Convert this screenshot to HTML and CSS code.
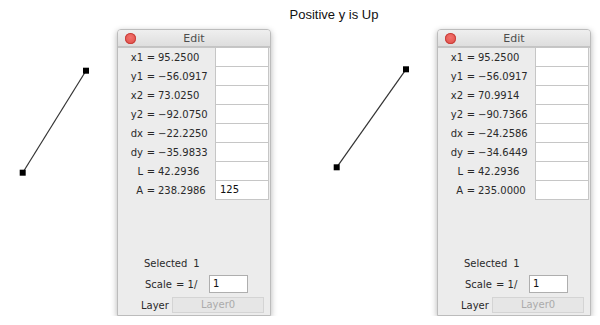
FILE: index.html
```html
<!DOCTYPE html>
<html lang="en">
<head>
    <meta charset="UTF-8">
    <meta name="viewport" content="width=device-width, initial-scale=1.0">
    <title>Positive y is Up</title>
    <link rel="stylesheet" href="styles.css">
</head>
<body>
    <div class="caption">Positive y is Up</div>
    <div class="stage">
        <div class="panel">
            <svg class="canvas" width="117" height="287">
                <line x1="22.7" y1="143.7" x2="86" y2="41.7"/>
                <rect x="19.7" y="140.7" width="6" height="6"/>
                <rect x="83" y="38.7" width="6" height="6"/>
            </svg>
            <div class="window">
                <div class="titlebar"><span class="close"></span><span class="win-title">Edit</span></div>
                <div class="fields">
                    <div class="row"><span class="lbl">x1</span><span class="eq">=</span><span class="val">95.2500</span><span class="field"></span></div>
                    <div class="row"><span class="lbl">y1</span><span class="eq">=</span><span class="val">&minus;56.0917</span><span class="field"></span></div>
                    <div class="row"><span class="lbl">x2</span><span class="eq">=</span><span class="val">73.0250</span><span class="field"></span></div>
                    <div class="row"><span class="lbl">y2</span><span class="eq">=</span><span class="val">&minus;92.0750</span><span class="field"></span></div>
                    <div class="row"><span class="lbl">dx</span><span class="eq">=</span><span class="val">&minus;22.2250</span><span class="field"></span></div>
                    <div class="row"><span class="lbl">dy</span><span class="eq">=</span><span class="val">&minus;35.9833</span><span class="field"></span></div>
                    <div class="row"><span class="lbl">L</span><span class="eq">=</span><span class="val">42.2936</span><span class="field"></span></div>
                    <div class="row"><span class="lbl">A</span><span class="eq">=</span><span class="val">238.2986</span><span class="field">125</span></div>
                </div>
                <div class="footer">
                    <div class="selected"><span>Selected</span><span class="count">1</span></div>
                    <div class="scale"><span class="scale-lbl">Scale</span><span class="scale-eq">= 1/</span><span class="input">1</span></div>
                    <div class="layer"><span class="layer-lbl">Layer</span><span class="layer-box">Layer0</span></div>
                </div>
            </div>
        </div>
        <div class="panel">
            <svg class="canvas" width="137" height="287">
                <line x1="36.7" y1="138.3" x2="106" y2="40.3"/>
                <rect x="33.7" y="135.3" width="6" height="6"/>
                <rect x="103" y="37.3" width="6" height="6"/>
            </svg>
            <div class="window">
                <div class="titlebar"><span class="close"></span><span class="win-title">Edit</span></div>
                <div class="fields">
                    <div class="row"><span class="lbl">x1</span><span class="eq">=</span><span class="val">95.2500</span><span class="field"></span></div>
                    <div class="row"><span class="lbl">y1</span><span class="eq">=</span><span class="val">&minus;56.0917</span><span class="field"></span></div>
                    <div class="row"><span class="lbl">x2</span><span class="eq">=</span><span class="val">70.9914</span><span class="field"></span></div>
                    <div class="row"><span class="lbl">y2</span><span class="eq">=</span><span class="val">&minus;90.7366</span><span class="field"></span></div>
                    <div class="row"><span class="lbl">dx</span><span class="eq">=</span><span class="val">&minus;24.2586</span><span class="field"></span></div>
                    <div class="row"><span class="lbl">dy</span><span class="eq">=</span><span class="val">&minus;34.6449</span><span class="field"></span></div>
                    <div class="row"><span class="lbl">L</span><span class="eq">=</span><span class="val">42.2936</span><span class="field"></span></div>
                    <div class="row"><span class="lbl">A</span><span class="eq">=</span><span class="val">235.0000</span><span class="field"></span></div>
                </div>
                <div class="footer">
                    <div class="selected"><span>Selected</span><span class="count">1</span></div>
                    <div class="scale"><span class="scale-lbl">Scale</span><span class="scale-eq">= 1/</span><span class="input">1</span></div>
                    <div class="layer"><span class="layer-lbl">Layer</span><span class="layer-box">Layer0</span></div>
                </div>
            </div>
        </div>
    </div>
</body>
</html>
```

FILE: styles.css
```css
body {
    margin: 0;
    background-color: white;
    font-family: "DejaVu Sans", sans-serif;
    color: #2a2a2a;
}
.caption {
    height: 29px;
    line-height: 29px;
    padding-left: 68px;
    text-align: center;
    font-family: "Liberation Sans", Arial, sans-serif;
    font-size: 13px;
    color: #111;
}
.stage {
    display: flex;
}
.panel {
    width: 300px;
    display: flex;
    align-items: flex-start;
}
.canvas {
    display: block;
    flex: none;
}
.canvas line {
    stroke: #333;
    stroke-width: 1.2;
}
.canvas rect {
    fill: #000;
}
.window {
    box-sizing: border-box;
    width: 154px;
    height: 287px;
    border: 1px solid #bcbcbc;
    border-radius: 4px 4px 0 0;
    background-color: #ececec;
    box-shadow: 0 2px 6px rgba(0, 0, 0, 0.3);
    font-size: 10px;
}
.titlebar {
    height: 16px;
    display: flex;
    align-items: center;
    border-bottom: 1px solid #c4c4c4;
    background: linear-gradient(#efefef, #dedede);
    border-radius: 3px 3px 0 0;
}
.close {
    width: 11px;
    height: 11px;
    margin-left: 7px;
    border-radius: 50%;
    background: radial-gradient(circle at 50% 40%, #f2726c, #de4a45);
    box-shadow: inset 0 0 0 1px #c8403b;
}
.win-title {
    flex: 1;
    padding-right: 18px;
    text-align: center;
    font-size: 11px;
    color: #4d4d4d;
}
.fields {
    border-top: 1px solid #c6c6c6;
}
.row {
    display: grid;
    grid-template-columns: 26px 14px 57px 54px;
    height: 19px;
    line-height: 19px;
}
.lbl {
    text-align: right;
    padding-right: 1px;
}
.eq {
    text-align: center;
}
.field {
    box-sizing: border-box;
    background-color: white;
    border-left: 1px solid #c6c6c6;
    border-right: 1px solid #c6c6c6;
    border-bottom: 1px solid #c6c6c6;
    padding-left: 4px;
    line-height: 18px;
    color: #111;
}
.footer {
    margin-top: 55px;
}
.selected {
    height: 18px;
    line-height: 18px;
    padding-left: 26px;
}
.count {
    margin-left: 6px;
}
.scale {
    display: flex;
    align-items: center;
    height: 20px;
    margin-top: 1px;
    padding-left: 27px;
}
.scale-lbl {
    width: 31px;
}
.scale-eq {
    width: 33px;
}
.input {
    box-sizing: border-box;
    width: 39px;
    height: 18px;
    line-height: 16px;
    padding-left: 3px;
    background-color: white;
    border: 1px solid #aeaeae;
    color: #111;
}
.layer {
    display: flex;
    align-items: center;
    height: 18px;
    margin-top: 2px;
    padding-left: 23px;
}
.layer-lbl {
    width: 31px;
}
.layer-box {
    box-sizing: border-box;
    width: 92px;
    height: 16px;
    line-height: 14px;
    text-align: center;
    background-color: #e6e6e6;
    border: 1px solid #d4d4d4;
    color: #ababab;
}
```
